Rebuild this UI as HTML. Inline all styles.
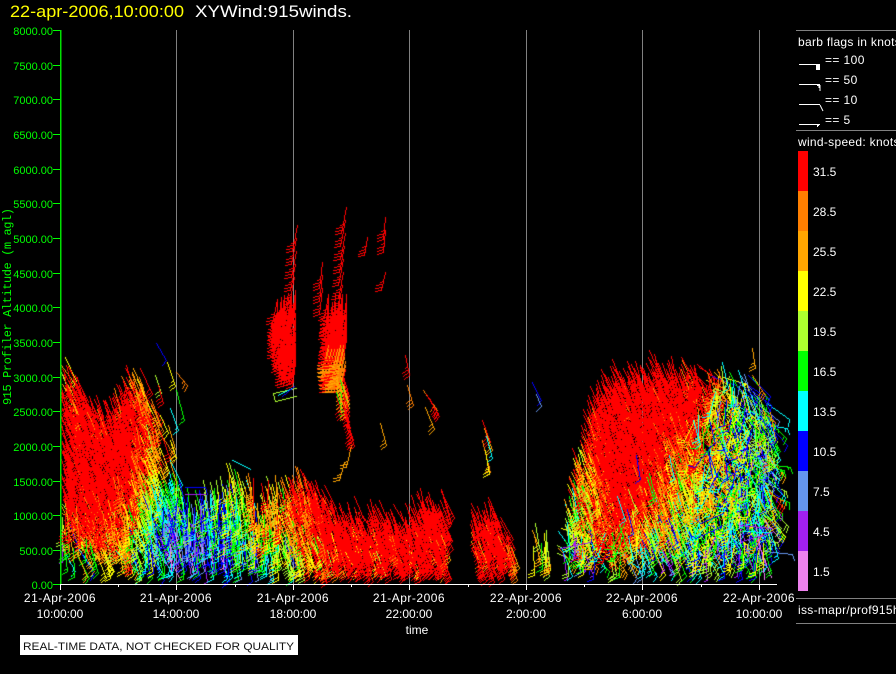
<!DOCTYPE html>
<html><head><meta charset="utf-8"><title>XYWind</title>
<style>
html,body{margin:0;padding:0;background:#000;width:896px;height:674px;overflow:hidden}
svg,canvas{position:absolute;left:0;top:0;display:block}
text{font-family:"Liberation Sans",sans-serif}
</style></head><body>
<svg width="896" height="674" shape-rendering="crispEdges">
<g fill="#808080">
<rect x="176" y="30" width="1" height="560"/><rect x="293" y="30" width="1" height="560"/><rect x="409" y="30" width="1" height="560"/><rect x="526" y="30" width="1" height="560"/><rect x="642" y="30" width="1" height="560"/><rect x="759" y="30" width="1" height="560"/>
</g></svg>
<canvas id="c" width="896" height="674"></canvas>
<svg width="896" height="674">
<g shape-rendering="crispEdges">
<rect x="60" y="30" width="1.6" height="555" fill="#00e000"/>
<g fill="#00ff00">
<rect x="53" y="30" width="7" height="1"/><rect x="53" y="65" width="7" height="1"/><rect x="53" y="99" width="7" height="1"/><rect x="53" y="134" width="7" height="1"/><rect x="53" y="169" width="7" height="1"/><rect x="53" y="203" width="7" height="1"/><rect x="53" y="238" width="7" height="1"/><rect x="53" y="273" width="7" height="1"/><rect x="53" y="307" width="7" height="1"/><rect x="53" y="342" width="7" height="1"/><rect x="53" y="377" width="7" height="1"/><rect x="53" y="411" width="7" height="1"/><rect x="53" y="446" width="7" height="1"/><rect x="53" y="481" width="7" height="1"/><rect x="53" y="515" width="7" height="1"/><rect x="53" y="550" width="7" height="1"/><rect x="53" y="584" width="7" height="1"/>
</g>
<rect x="60" y="584" width="717" height="1" fill="#fff"/>
<g fill="#fff">
<rect x="60" y="584" width="1" height="6"/><rect x="118" y="584" width="1" height="3"/><rect x="235" y="584" width="1" height="3"/><rect x="351" y="584" width="1" height="3"/><rect x="468" y="584" width="1" height="3"/><rect x="584" y="584" width="1" height="3"/><rect x="701" y="584" width="1" height="3"/>
<rect x="176" y="584" width="1" height="6"/><rect x="293" y="584" width="1" height="6"/><rect x="409" y="584" width="1" height="6"/><rect x="526" y="584" width="1" height="6"/><rect x="642" y="584" width="1" height="6"/><rect x="759" y="584" width="1" height="6"/>
</g>
<g fill="#808080">
<rect x="796" y="30" width="100" height="1"/><rect x="796" y="130" width="100" height="1"/><rect x="796" y="598" width="100" height="1"/><rect x="796" y="623" width="100" height="1"/>
</g>
<rect x="798" y="151" width="10" height="40" fill="#ff0000"/><rect x="798" y="191" width="10" height="40" fill="#ff7f00"/><rect x="798" y="231" width="10" height="40" fill="#ffa500"/><rect x="798" y="271" width="10" height="40" fill="#ffff00"/><rect x="798" y="311" width="10" height="40" fill="#adff2f"/><rect x="798" y="351" width="10" height="40" fill="#00ff00"/><rect x="798" y="391" width="10" height="40" fill="#00ffff"/><rect x="798" y="431" width="10" height="40" fill="#0000ff"/><rect x="798" y="471" width="10" height="40" fill="#6495ed"/><rect x="798" y="511" width="10" height="40" fill="#a020f0"/><rect x="798" y="551" width="10" height="40" fill="#ee82ee"/>
<g fill="#fff">
<rect x="799" y="64" width="21" height="1"/><rect x="816" y="64" width="4" height="6"/>
<rect x="799" y="84" width="21" height="1"/><rect x="799" y="104" width="21" height="1"/><rect x="799" y="124" width="21" height="1"/>
<rect x="817" y="125" width="2" height="1"/><rect x="817" y="126" width="1" height="1"/>
</g>
<rect x="20" y="635" width="278" height="20" fill="#fff"/>
</g>
<path d="M817 85H820.5V91H819.5V88H818.5V86H817Z" fill="#fff"/>
<path d="M820 105L823 111" stroke="#fff" stroke-width="1" fill="none"/>
<text x="10" y="17" font-size="16.4" fill="#ffff00" textLength="174" lengthAdjust="spacingAndGlyphs">22-apr-2006,10:00:00</text>
<text x="195" y="17" font-size="16.4" fill="#fff" textLength="157" lengthAdjust="spacingAndGlyphs">XYWind:915winds.</text>
<g font-size="11" fill="#00ff00" text-anchor="end">
<text x="53" y="35">8000.00</text><text x="53" y="70">7500.00</text><text x="53" y="104">7000.00</text><text x="53" y="139">6500.00</text><text x="53" y="174">6000.00</text><text x="53" y="208">5500.00</text><text x="53" y="243">5000.00</text><text x="53" y="278">4500.00</text><text x="53" y="312">4000.00</text><text x="53" y="347">3500.00</text><text x="53" y="382">3000.00</text><text x="53" y="416">2500.00</text><text x="53" y="451">2000.00</text><text x="53" y="486">1500.00</text><text x="53" y="520">1000.00</text><text x="53" y="555">500.00</text><text x="53" y="589">0.00</text>
</g>
<text transform="translate(11,405) rotate(-90)" style="font-family:'Liberation Mono',monospace" font-size="12" fill="#00ff00" textLength="197" lengthAdjust="spacing">915 Profiler Altitude (m agl)</text>
<g font-size="12" fill="#fff" text-anchor="middle">
<text x="60" y="602" letter-spacing=".5">21-Apr-2006</text><text x="60" y="618">10:00:00</text>
<text x="176" y="602" letter-spacing=".5">21-Apr-2006</text><text x="176" y="618">14:00:00</text>
<text x="293" y="602" letter-spacing=".5">21-Apr-2006</text><text x="293" y="618">18:00:00</text>
<text x="409" y="602" letter-spacing=".5">21-Apr-2006</text><text x="409" y="618">22:00:00</text>
<text x="526" y="602" letter-spacing=".5">22-Apr-2006</text><text x="526" y="618">2:00:00</text>
<text x="642" y="602" letter-spacing=".5">22-Apr-2006</text><text x="642" y="618">6:00:00</text>
<text x="759" y="602" letter-spacing=".5">22-Apr-2006</text><text x="759" y="618">10:00:00</text>
<text x="417" y="634">time</text>
</g>
<g font-size="12" fill="#fff">
<text x="798" y="46" letter-spacing=".3">barb flags in knots</text>
<text x="825" y="64" letter-spacing=".4">== 100</text><text x="825" y="84" letter-spacing=".4">== 50</text><text x="825" y="104" letter-spacing=".4">== 10</text><text x="825" y="124" letter-spacing=".4">== 5</text>
<text x="798" y="146" letter-spacing=".3">wind-speed: knots</text>
<text x="813" y="176">31.5</text><text x="813" y="216">28.5</text><text x="813" y="256">25.5</text><text x="813" y="296">22.5</text><text x="813" y="336">19.5</text><text x="813" y="376">16.5</text><text x="813" y="416">13.5</text><text x="813" y="456">10.5</text><text x="813" y="496">7.5</text><text x="813" y="536">4.5</text><text x="813" y="576">1.5</text>
<text x="798" y="614" letter-spacing=".3">iss-mapr/prof915h</text>
</g>
<text x="23" y="650" font-size="11" fill="#111" textLength="271" lengthAdjust="spacingAndGlyphs">REAL-TIME DATA, NOT CHECKED FOR QUALITY</text>
</svg>
<script>
(function(){
var ctx=document.getElementById('c').getContext('2d');
var seed=915;
function R(){seed|=0;seed=seed+0x6D2B79F5|0;var t=Math.imul(seed^seed>>>15,1|seed);t=t+Math.imul(t^t>>>7,61|t)^t;return((t^t>>>14)>>>0)/4294967296}
function G(){return (R()+R()+R()+R()-2)*1.73}
var P=['#ee82ee','#a020f0','#6495ed','#0000ff','#00ffff','#00ff00','#adff2f','#ffff00','#ffa500','#ff7f00','#ff0000'];
function col(s){var i=Math.floor(s/3);return P[Math.max(0,Math.min(10,i))]}
function L(x0,y0,x1,y1){x0=Math.round(x0);y0=Math.round(y0);x1=Math.round(x1);y1=Math.round(y1);
 var dx=Math.abs(x1-x0),dy=Math.abs(y1-y0),sx=x0<x1?1:-1,sy=y0<y1?1:-1,e=dx-dy;
 for(var n=0;n<200;n++){ctx.fillRect(x0,y0,1,1);if(x0==x1&&y0==y1)break;var e2=2*e;if(e2>-dy){e-=dy;x0+=sx}if(e2<dx){e+=dx;y0+=sy}}}
function barb(x,y,dx,dy,s){
 ctx.fillStyle=col(s);
 var ex=x+dx,ey=y+dy,l=Math.sqrt(dx*dx+dy*dy),ux=dx/l,uy=dy/l,tx=-uy,ty=ux;
 L(x,y,ex,ey);
 var n=Math.round(Math.min(s,34)/5),p=0;
 while(n>=2){var bx=ex-ux*p,by=ey-uy*p;L(bx,by,bx+tx*6+ux*2.5,by+ty*6+uy*2.5);p+=3;n-=2}
 if(n==1){var bx=ex-ux*p,by=ey-uy*p;L(bx,by,bx+tx*3+ux*1.2,by+ty*3+uy*1.2)}
}
var xs=[62,90,120,150,175,200,225,250,275,300,330,445,470,515,530,548,565,585,610,640,670,700,730,755,775];
var ys=[550,510,470,430,390,350];
var T=[
[12,20,23,12,9,9,11,13,17,25,34,36,36,36,23,23,14,16,25,14,13,15,14,14,14],
[28,38,26,14,11,14,16,22,26,30,40,40,40,40,23,23,20,23,38,28,20,18,17,14,18],
[38,40,38,22,17,17,19,26,28,36,40,40,40,40,23,23,24,28,40,38,26,22,20,13,18],
[38,40,40,28,24,22,22,24,27,36,40,40,40,40,23,23,28,36,40,40,32,28,17,13,18],
[31,36,33,29,24,22,22,24,27,36,38,38,38,38,23,23,28,38,40,40,40,33,17,14,20],
[26,28,27,26,24,22,22,24,27,36,38,38,38,38,23,23,28,38,40,40,40,38,20,16,22]];
function idx(a,v){for(var i=0;i<a.length-1;i++){if(v<=a[i+1])return i}return a.length-2}
function speed(x,y){
 var i=idx(xs,x),fx=Math.max(0,Math.min(1,(x-xs[i])/(xs[i+1]-xs[i])));
 var j=0;while(j<4&&y<ys[j+1])j++;
 var fy=Math.max(0,Math.min(1,(ys[j]-y)/(ys[j]-ys[j+1])));
 var a=T[j][i]*(1-fx)+T[j][i+1]*fx,b=T[j+1][i]*(1-fx)+T[j+1][i+1]*fx;
 return a*(1-fy)+b*fy;
}
var E=[[60,350],[75,370],[90,395],[110,395],[125,365],[140,375],[155,400],[165,440],[178,480],[190,492],[230,465],[250,478],[275,475],[300,465],[315,480],[340,502],[400,502],[425,490],[447,495],
[470,505],[490,505],[514,535],[530,520],[548,520],[560,530],[570,465],[580,430],[590,385],[605,370],[625,362],[657,355],[690,362],[720,365],[750,375],[772,405]];
function env(x){for(var i=0;i<E.length-1;i++){if(x>=E[i][0]&&x<=E[i+1][0]){var f=(x-E[i][0])/(E[i+1][0]-E[i][0]);return E[i][1]*(1-f)+E[i+1][1]*f}}return 999}
function gap(x){return (x>444&&x<470)||(x>513&&x<530)||(x>548&&x<556)||x>770}
for(var x=62;x<772;x+=3.9){
 if(gap(x))continue;
 var top=env(x)+G()*4;
 var bot=(x>530&&x<548)?550:552;
 for(var y=bot;y>=top;y-=4){
  var p=.96;
  if(x<175&&y>535)p=.55;
  if(x<100&&y>530)p=.35;
  if(x>=175&&x<280)p=y>540?.65:.82;
  if(x>150&&x<180&&y<480)p=.3;
  if(x>=555&&x<600&&y>530)p=.45;
  if(x>=600&&x<700&&y>535)p=.45;
  if(x>=690)p=.75;
  if(x>=700&&y>530)p=.5;
  if(x>510&&x<556)p=.55;
  if(y<top+12)p*=.65;
  if(R()>p)continue;
  var m=speed(x,y),sd=(x>690?6:(x>555&&y>480?6:4.2));
  var s=m+G()*sd;
  if(y>520&&R()<.06)s=m-8-R()*8;
  var th,len=27+G()*2;
  if(x<175)th=.38;else if(x<280)th=.14;else if(x<520)th=.34;else if(x<556)th=.2;else th=.38;
  var jit=.1;
  if(x>690||((x>555&&x<640)&&y>520))jit=.42;
  else if(x<180&&y>500)jit=.24;
  th+=G()*jit;
  barb(x+G()*1,y+G()*1,Math.sin(th)*len,Math.cos(th)*len,s);
 }
}
/* mixed long lines through the right block */
for(var i=0;i<55;i++){var x0=690+R()*75,y0=380+R()*170,a=.2+G()*.7;barb(x0,y0,Math.sin(a)*25,Math.cos(a)*25,[11,14,16,19,22,9,13][Math.floor(R()*7)])}
for(var i=0;i<12;i++){var x0=615+R()*70,y0=440+R()*100;barb(x0,y0,4+R()*6,24,[14,17,20,11][Math.floor(R()*4)])}
/* upper cluster A */
for(var x=277;x<298;x+=3.5){for(var y=288+(298-x)*.5;y<362-(x<284?(284-x)*4:0);y+=3.8){if(R()<.88)barb(x,y,-3+G(),24,36)}}
for(var y=225;y<288;y+=13){barb(297-(y-225)*.05,y,-5,26,36)}
/* upper cluster B */
for(var x=328;x<347;x+=3.5){for(var y=294;y<346;y+=3.8){if(R()<.9)barb(x,y,-3+G(),24,36)}}
for(var y=207;y<288;y+=13){barb(346-(y-207)*.05,y,-5,26,36)}
for(var y=262;y<298;y+=13){barb(322,y,-3,26,36)}
for(var x=328;x<344;x+=3){for(var y=345;y<372;y+=4){barb(x+(y-345)*.1,y,-5,22,R()<.45?27:(R()<.5?24:36))}}
for(var x=336;x<346;x+=3.5){for(var y=376;y<398;y+=4){barb(x,y,6,20,R()<.5?26:(R()<.2?16:36))}}
for(var y=400;y<428;y+=6){barb(342+(y-400)*.2,y,7,22,36)}
/* cluster A bottom low-speed */
ctx.fillStyle='#adff2f';L(273,393,296,388);L(275,401,296,396);L(273,393,275,401);
ctx.fillStyle='#00ffff';L(278,395,291,388);ctx.fillStyle='#0000ff';L(282,396,294,386);
/* sparse singles */
[[367,237,-3,18,36],[385,217,-2,22,36],[385,230,-2,22,36],[385,272,-4,18,36],
[405,355,4,20,36],[407,385,6,20,28],[423,390,14,20,28],[426,394,12,20,36],[429,398,10,18,36],[425,407,9,22,25],[380,423,6,22,25],
[351,445,-5,22,26],[344,462,-5,18,24],[346,425,6,20,36],[482,420,8,22,36],[484,428,8,22,25],[486,436,6,22,14],[482,440,8,32,27],[485,450,4,24,23],
[532,382,9,18,10],[536,394,5,12,8],[156,343,10,17,10],[167,362,8,24,23],[176,372,11,13,27],[155,375,6,18,20],[176,390,8,30,16],[158,385,5,18,32],[170,408,8,22,13],[168,425,7,24,25],[160,415,8,18,21],[170,440,6,18,22],
[732,462,16,8,13],[752,348,3,20,26],[752,375,13,20,28],[762,410,13,12,27],[738,370,8,24,13],[722,362,6,26,14],[768,420,6,18,14],[770,445,4,22,20],[772,490,-2,20,20]
].forEach(function(b){barb(b[0],b[1],b[2],b[3],b[4])});
ctx.fillStyle='#0000ff';L(185,487,205,487);L(205,487,207,494);
ctx.fillStyle='#a020f0';L(185,494,205,494);
ctx.fillStyle='#00ffff';L(232,460,250,469);
ctx.fillStyle='#a020f0';L(560,548,590,542);L(740,525,772,528);L(745,540,772,532);
})();
</script>
</body></html>
